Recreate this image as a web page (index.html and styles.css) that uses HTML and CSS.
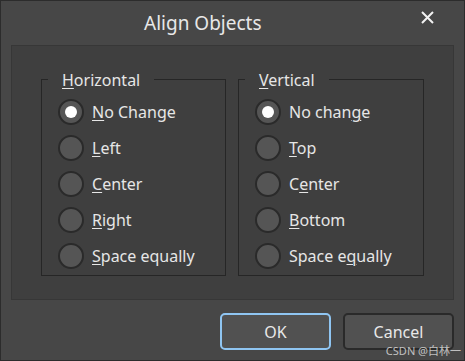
FILE: index.html
```html
<!DOCTYPE html>
<html lang="en">
<head>
<meta charset="utf-8">
<title>Align Objects</title>
<link rel="stylesheet" href="styles.css">
</head>
<body>
<div class="window">
  <div class="titlebar">
    <span class="title">Align Objects</span>
    <svg class="close" width="13" height="13" viewBox="0 0 13 13" aria-hidden="true">
      <path d="M1 1 L12 12 M12 1 L1 12" stroke="#f2f2f2" stroke-width="2" fill="none"/>
    </svg>
  </div>
  <div class="panel">
    <fieldset class="group">
      <legend><u>H</u>orizontal</legend>
      <div class="row"><span class="radio checked"></span><span class="label"><u>N</u>o Change</span></div>
      <div class="row"><span class="radio"></span><span class="label"><u>L</u>eft</span></div>
      <div class="row"><span class="radio"></span><span class="label"><u>C</u>enter</span></div>
      <div class="row"><span class="radio"></span><span class="label"><u>R</u>ight</span></div>
      <div class="row"><span class="radio"></span><span class="label"><u>S</u>pace equally</span></div>
    </fieldset>
    <fieldset class="group">
      <legend><u>V</u>ertical</legend>
      <div class="row"><span class="radio checked"></span><span class="label">No chan<u>g</u>e</span></div>
      <div class="row"><span class="radio"></span><span class="label"><u>T</u>op</span></div>
      <div class="row"><span class="radio"></span><span class="label">C<u>e</u>nter</span></div>
      <div class="row"><span class="radio"></span><span class="label"><u>B</u>ottom</span></div>
      <div class="row"><span class="radio"></span><span class="label">Space e<u>q</u>ually</span></div>
    </fieldset>
  </div>
  <div class="buttons">
    <div class="btn default">OK</div>
    <div class="btn">Cancel</div>
  </div>
  <div class="watermark">CSDN @白林一</div>
</div>
</body>
</html>
```
FILE: styles.css
```css
* { box-sizing: border-box; }
html, body { margin: 0; padding: 0; background: #474747; }
body { font-family: "Noto Sans", "Noto Sans CJK SC", sans-serif; color: #e6e6e6; }

.window {
  position: relative;
  width: 465px;
  height: 361px;
  background: #474747;
  border: 1px solid #2c2c2c;
  display: flex;
  flex-direction: column;
}

.titlebar {
  height: 44px;
  display: flex;
  align-items: flex-start;
  padding-left: 143px;
  padding-top: 9px;
}
.title {
  font-size: 19px;
  line-height: 26px;
  color: #e8e8e8;
  flex: 1;
}
.close {
  margin-top: 1px;
  margin-right: 30px;
}

.panel {
  margin: 0 10px;
  height: 255px;
  background: #3f3f3f;
  border: 1px solid #373737;
  display: grid;
  grid-template-columns: 185px 186px;
  column-gap: 12px;
  padding: 22px 0 0 29px;
  align-content: start;
}

.group {
  margin: 0;
  border: 1px solid #262626;
  padding: 4px 16px 1px 16px;
  min-width: 0;
}
.group legend {
  font-size: 16px;
  line-height: 20px;
  padding: 2px 14px 0 14px;
  margin-left: -10px;
  color: #e6e6e6;
}

u {
  text-decoration: underline;
  text-underline-offset: 2px;
  text-decoration-thickness: 1px;
}

.row {
  height: 36px;
  display: flex;
  align-items: center;
  gap: 8px;
}
.radio {
  width: 26px;
  height: 26px;
  border-radius: 50%;
  background: #555555;
  border: 2px solid #2a2a2a;
  display: flex;
  align-items: center;
  justify-content: center;
  flex: none;
}
.radio.checked::after {
  content: "";
  width: 12px;
  height: 12px;
  border-radius: 50%;
  background: #ffffff;
}
.label {
  font-size: 16px;
  line-height: 20px;
  color: #e6e6e6;
}

.buttons {
  margin-top: 13px;
  display: flex;
  justify-content: flex-end;
  gap: 12px;
  padding-right: 10px;
}
.btn {
  width: 111px;
  height: 37px;
  border-radius: 5px;
  background: #515151;
  border: 2px solid #2a2a2a;
  display: flex;
  align-items: center;
  justify-content: center;
  font-size: 16px;
  color: #e8e8e8;
}
.btn.default {
  border-color: #8fc5f2;
}

.watermark {
  position: absolute;
  right: 3px;
  bottom: 3px;
  font-size: 11px;
  line-height: 13px;
  color: rgba(225, 225, 225, 0.8);
}
```
